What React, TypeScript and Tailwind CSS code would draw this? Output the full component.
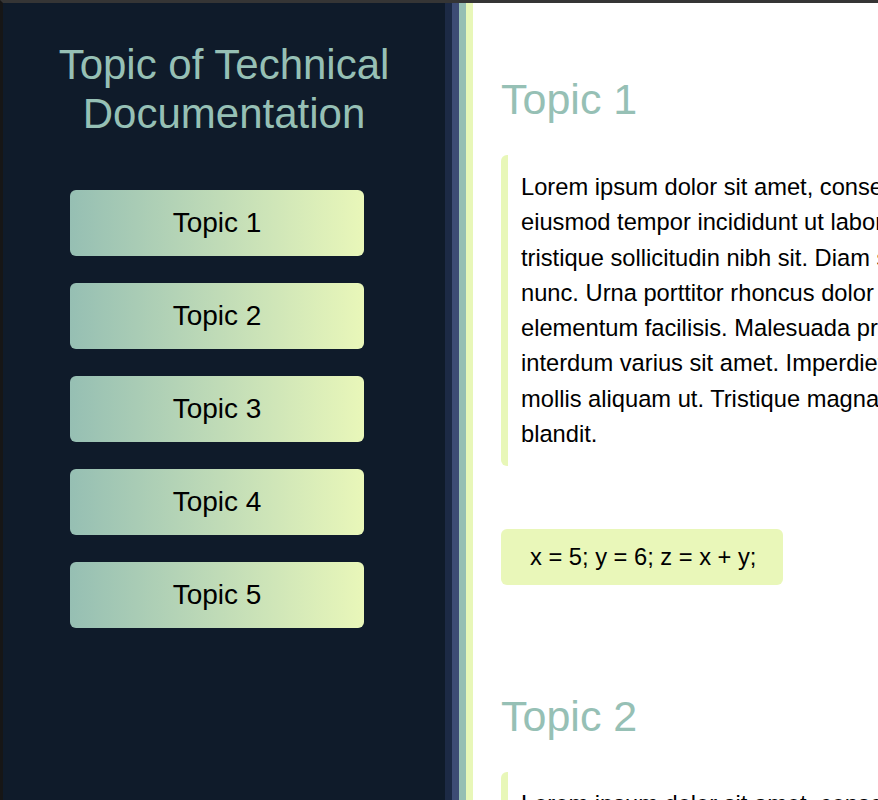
const topics = ["Topic 1", "Topic 2", "Topic 3", "Topic 4", "Topic 5"];

const lorem = [
  "Lorem ipsum dolor sit amet, consectetur adipiscing elit, sed do",
  "eiusmod tempor incididunt ut labore et dolore magna aliqua. Ut",
  "tristique sollicitudin nibh sit. Diam sit amet nisl suscipit adipiscing",
  "nunc. Urna porttitor rhoncus dolor purus non enim praesent",
  "elementum facilisis. Malesuada proin libero nunc consequat",
  "interdum varius sit amet. Imperdiet sed euismod nisi porta lorem",
  "mollis aliquam ut. Tristique magna sit amet purus gravida quis",
  "blandit.",
];

export default function App() {
  return (
    <div
      className="flex h-[800px] w-[878px] overflow-hidden border-t-[3px] border-l-[3px] border-t-[#353535] border-l-[#161616]"
      style={{ fontFamily: '"Liberation Sans", Arial, Helvetica, sans-serif' }}
    >
      <Sidebar />
      <div className="flex shrink-0">
        <div className="w-[7px] bg-[#1c2a45]" />
        <div className="w-[7px] bg-[#3d4c74]" />
        <div className="w-[7px] bg-[#96bfb3]" />
        <div className="w-[7px] bg-[#e8f7b8]" />
      </div>
      <main className="min-w-0 flex-1 overflow-hidden bg-white pl-[28px] pt-[67px]">
        <Section title="Topic 1" code />
        <Section title="Topic 2" />
      </main>
    </div>
  );
}

function Sidebar() {
  return (
    <nav className="w-[442px] shrink-0 bg-[#0f1b2a] pt-[37px]">
      <h1 className="text-center text-[42px] leading-[49px] text-[#96c0b5]">
        Topic of Technical
        <br />
        Documentation
      </h1>
      <ul className="mt-[52px] flex flex-col gap-[27px] pl-[67px]">
        {topics.map((t) => (
          <li key={t}>
            <a
              href="#"
              className="flex h-[66px] w-[294px] items-center justify-center rounded-[6px] bg-gradient-to-r from-[#96bfb3] to-[#e9f7b9] text-[28px] text-black"
            >
              {t}
            </a>
          </li>
        ))}
      </ul>
    </nav>
  );
}

function Section({ title, code = false }: { title: string; code?: boolean }) {
  return (
    <section className="mb-[102px] w-[1000px]">
      <h2 className="text-[43px] leading-[58px] text-[#96c0b5]">{title}</h2>
      <blockquote className="mt-[27px] rounded-[6px] border-l-[7px] border-[#e8f7b8] pb-[14px] pl-[13px] pt-[15px] text-[23.7px] leading-[35.3px] text-black">
        {lorem.map((line) => (
          <div key={line} className="whitespace-nowrap">
            {line}
          </div>
        ))}
      </blockquote>
      {code && (
        <div className="mt-[63px] flex h-[56px] w-[282px] items-center rounded-[6px] bg-[#e9f7b9] pl-[29px] text-[23.7px] text-black">
          x = 5; y = 6; z = x + y;
        </div>
      )}
    </section>
  );
}
